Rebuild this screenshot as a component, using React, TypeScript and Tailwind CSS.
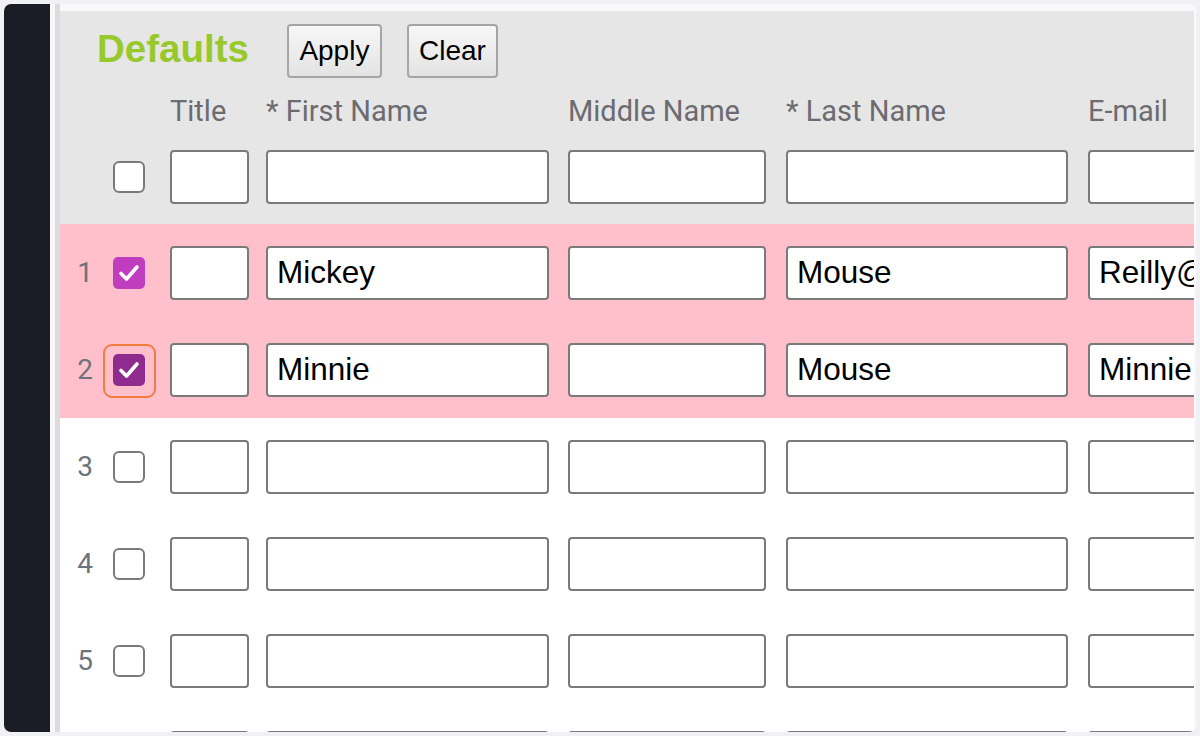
import React from "react";

const labelFont = { fontFamily: "Roboto, 'Liberation Sans', sans-serif" };
const inputFont = { fontFamily: "'Liberation Sans', Arial, sans-serif" };

function Box({ w, value }: { w: string; value?: string }) {
  return (
    <div
      className={`${w} h-[54px] shrink-0 bg-white border-2 border-[#7a7a7a] rounded-[4px] flex items-center pl-[9px] text-[31.5px] text-black overflow-hidden whitespace-nowrap`}
      style={inputFont}
    >
      {value}
    </div>
  );
}

function Check({ state }: { state: "off" | "on" | "focus" }) {
  if (state === "off") {
    return <div className="w-[32px] h-[32px] shrink-0 rounded-[6px] border-2 border-[#7a7a7a] bg-white" />;
  }
  const bg = state === "on" ? "bg-[#c13dc0]" : "bg-[#8f2a8f]";
  const box = (
    <div className={`w-[32px] h-[32px] shrink-0 rounded-[5px] ${bg} flex items-center justify-center`}>
      <svg width="22" height="20" viewBox="0 0 22 20">
        <path d="M3 10.5 L8.5 16 L19 4" fill="none" stroke="white" strokeWidth="3.6" strokeLinecap="round" strokeLinejoin="round" />
      </svg>
    </div>
  );
  if (state === "focus") {
    return (
      <div className="w-[32px] h-[32px] shrink-0 relative">
        <div className="absolute -left-[10px] -top-[10px] w-[53px] h-[54px] rounded-[9px] border-[2.5px] border-[#f47b3e]" />
        {box}
      </div>
    );
  }
  return box;
}

function Fields({ first, last, email }: { first?: string; last?: string; email?: string }) {
  return (
    <div className="ml-[25px] flex items-center shrink-0">
      <Box w="w-[79px]" />
      <div className="ml-[17px] shrink-0"><Box w="w-[283px]" value={first} /></div>
      <div className="ml-[19px] shrink-0"><Box w="w-[198px]" /></div>
      <div className="ml-[20px] shrink-0"><Box w="w-[282px]" value={last} /></div>
      <div className="ml-[20px] shrink-0"><Box w="w-[200px]" value={email} /></div>
    </div>
  );
}

function Row({
  num,
  check,
  first,
  last,
  email,
  bg,
}: {
  num: string;
  check: "off" | "on" | "focus";
  first?: string;
  last?: string;
  email?: string;
  bg: string;
}) {
  return (
    <div className={`h-[97px] flex items-center overflow-hidden ${bg}`}>
      <div className="w-[33px] shrink-0 text-right text-[28px] text-[#6e737a]" style={labelFont}>
        {num}
      </div>
      <div className="ml-[20px] shrink-0">
        <Check state={check} />
      </div>
      <Fields first={first} last={last} email={email} />
    </div>
  );
}

export default function App() {
  return (
    <div className="w-[1200px] h-[736px] bg-[#f1f0f5] p-[4px] overflow-hidden">
      <div className="flex h-full rounded-[7px] overflow-hidden bg-[#f9f9fb]">
        <div className="w-[46px] shrink-0 bg-[#1a1d26]" />
        <div className="w-[5px] shrink-0 bg-[#f8f8f8]" />
        <div className="w-[5px] shrink-0 bg-[#dcdcdc]" />
        <div className="flex-1 min-w-0 pt-[7px] pr-[2px] overflow-hidden">
          <div className="h-full overflow-hidden bg-white">
            <div className="bg-[#e6e6e6] h-[213px] overflow-hidden">
              <div className="flex items-center pt-[13px] pl-[37px]">
                <div
                  className="text-[38.5px] font-bold text-[#98c92b] leading-none -mt-[4px] shrink-0"
                  style={inputFont}
                >
                  Defaults
                </div>
                <button
                  className="ml-[38px] shrink-0 w-[95px] h-[54px] rounded-[4px] border-2 border-[#a5a5a5] bg-gradient-to-b from-[#f7f7f7] to-[#e3e3e3] text-[28px] text-black"
                  style={inputFont}
                >
                  Apply
                </button>
                <button
                  className="ml-[25px] shrink-0 w-[91px] h-[54px] rounded-[4px] border-2 border-[#a5a5a5] bg-gradient-to-b from-[#f7f7f7] to-[#e3e3e3] text-[28px] text-black"
                  style={inputFont}
                >
                  Clear
                </button>
              </div>
              <div
                className="flex items-center mt-[18px] h-[32px] text-[29px] text-[#6b6b70] whitespace-nowrap"
                style={labelFont}
              >
                <div className="ml-[110px] w-[96px] shrink-0">Title</div>
                <div className="w-[302px] shrink-0">* First Name</div>
                <div className="w-[218px] shrink-0">Middle Name</div>
                <div className="w-[302px] shrink-0">* Last Name</div>
                <div className="shrink-0">E-mail</div>
              </div>
              <div className="flex items-center mt-[22px]">
                <div className="w-[33px] shrink-0" />
                <div className="ml-[20px] shrink-0">
                  <Check state="off" />
                </div>
                <Fields />
              </div>
            </div>
            <Row num="1" check="on" first="Mickey" last="Mouse" email="Reilly@disney.com" bg="bg-[#ffc0cb]" />
            <Row num="2" check="focus" first="Minnie" last="Mouse" email="Minnie@disney.com" bg="bg-[#ffc0cb]" />
            <Row num="3" check="off" bg="bg-white" />
            <Row num="4" check="off" bg="bg-white" />
            <Row num="5" check="off" bg="bg-white" />
            <Row num="" check="off" bg="bg-white" />
          </div>
        </div>
      </div>
    </div>
  );
}
